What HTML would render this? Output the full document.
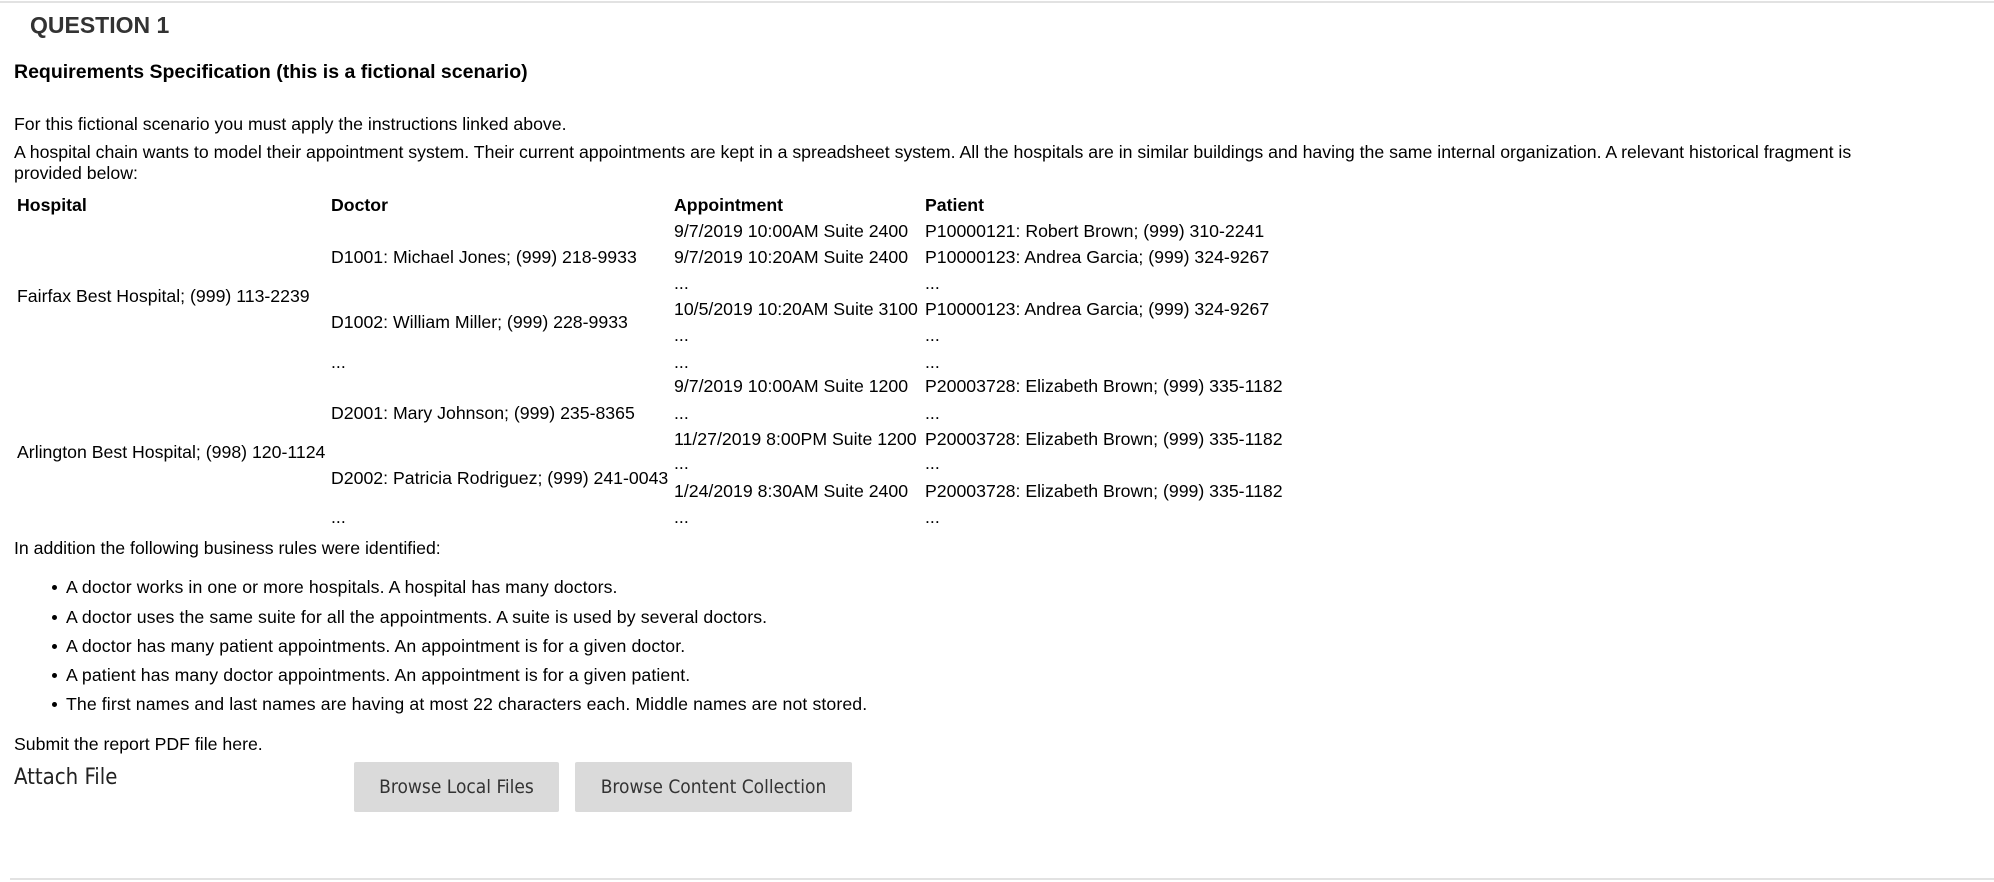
<!DOCTYPE html>
<html><head><meta charset="utf-8"><style>
html,body{margin:0;padding:0;background:#fff;}
body{width:1994px;height:882px;position:relative;overflow:hidden;font-family:"Liberation Sans",Arial,sans-serif;color:#000;}
.a{position:absolute;white-space:nowrap;font-size:17.7px;line-height:22px;margin-top:0px;}
.b{font-weight:bold;}
.btn{position:absolute;top:762px;height:50px;background:#dadada;border-radius:2px;color:#333;font-size:19px;line-height:50px;text-align:center;font-family:"DejaVu Sans Condensed","Liberation Sans",sans-serif;}
.li{position:absolute;left:66px;white-space:nowrap;font-size:17.7px;line-height:22px;letter-spacing:0.1px;}
.li:before{content:"";position:absolute;left:-14px;top:9px;width:5px;height:5px;border-radius:50%;background:#000;}
</style></head><body>
<div style="position:absolute;left:0;top:1px;width:1994px;height:2px;background:#e2e2e2"></div>
<div class="a b" style="left:30px;top:12px;font-size:23px;line-height:27px;color:#333">QUESTION 1</div>
<div class="a b" style="left:14px;top:61px;font-size:19.5px;line-height:23px">Requirements Specification (this is a fictional scenario)</div>
<div class="a" style="left:14px;top:113px">For this fictional scenario you must apply the instructions linked above.</div>
<div class="a" style="left:14px;top:141px">A hospital chain wants to model their appointment system. Their current appointments are kept in a spreadsheet system. All the hospitals are in similar buildings and having the same internal organization. A relevant historical fragment is</div>
<div class="a" style="left:14px;top:162px">provided below:</div>

<div class="a b" style="left:17px;top:194px">Hospital</div>
<div class="a b" style="left:331px;top:194px">Doctor</div>
<div class="a b" style="left:674px;top:194px">Appointment</div>
<div class="a b" style="left:925px;top:194px">Patient</div>

<div class="a" style="left:17px;top:285px">Fairfax Best Hospital; (999) 113-2239</div>
<div class="a" style="left:17px;top:441px">Arlington Best Hospital; (998) 120-1124</div>

<div class="a" style="left:331px;top:246px">D1001: Michael Jones; (999) 218-9933</div>
<div class="a" style="left:331px;top:311px">D1002: William Miller; (999) 228-9933</div>
<div class="a" style="left:331px;top:351px">...</div>
<div class="a" style="left:331px;top:402px">D2001: Mary Johnson; (999) 235-8365</div>
<div class="a" style="left:331px;top:467px">D2002: Patricia Rodriguez; (999) 241-0043</div>
<div class="a" style="left:331px;top:506px">...</div>

<div class="a" style="left:674px;top:220px">9/7/2019 10:00AM Suite 2400</div>
<div class="a" style="left:674px;top:246px">9/7/2019 10:20AM Suite 2400</div>
<div class="a" style="left:674px;top:272px">...</div>
<div class="a" style="left:674px;top:298px">10/5/2019 10:20AM Suite 3100</div>
<div class="a" style="left:674px;top:324px">...</div>
<div class="a" style="left:674px;top:351px">...</div>
<div class="a" style="left:674px;top:375px">9/7/2019 10:00AM Suite 1200</div>
<div class="a" style="left:674px;top:402px">...</div>
<div class="a" style="left:674px;top:428px">11/27/2019 8:00PM Suite 1200</div>
<div class="a" style="left:674px;top:452px">...</div>
<div class="a" style="left:674px;top:480px">1/24/2019 8:30AM Suite 2400</div>
<div class="a" style="left:674px;top:506px">...</div>

<div class="a" style="left:925px;top:220px">P10000121: Robert Brown; (999) 310-2241</div>
<div class="a" style="left:925px;top:246px">P10000123: Andrea Garcia; (999) 324-9267</div>
<div class="a" style="left:925px;top:272px">...</div>
<div class="a" style="left:925px;top:298px">P10000123: Andrea Garcia; (999) 324-9267</div>
<div class="a" style="left:925px;top:324px">...</div>
<div class="a" style="left:925px;top:351px">...</div>
<div class="a" style="left:925px;top:375px">P20003728: Elizabeth Brown; (999) 335-1182</div>
<div class="a" style="left:925px;top:402px">...</div>
<div class="a" style="left:925px;top:428px">P20003728: Elizabeth Brown; (999) 335-1182</div>
<div class="a" style="left:925px;top:452px">...</div>
<div class="a" style="left:925px;top:480px">P20003728: Elizabeth Brown; (999) 335-1182</div>
<div class="a" style="left:925px;top:506px">...</div>

<div class="a" style="left:14px;top:537px">In addition the following business rules were identified:</div>
<div class="li" style="top:576px">A doctor works in one or more hospitals. A hospital has many doctors.</div>
<div class="li" style="top:606px">A doctor uses the same suite for all the appointments. A suite is used by several doctors.</div>
<div class="li" style="top:635px">A doctor has many patient appointments. An appointment is for a given doctor.</div>
<div class="li" style="top:664px">A patient has many doctor appointments. An appointment is for a given patient.</div>
<div class="li" style="top:693px">The first names and last names are having at most 22 characters each. Middle names are not stored.</div>
<div class="a" style="left:14px;top:733px">Submit the report PDF file here.</div>
<div class="a" style="left:14px;top:765px;font-size:22px;line-height:26px;color:#222;font-family:'DejaVu Sans Condensed','Liberation Sans',sans-serif">Attach File</div>
<div class="btn" style="left:354px;width:205px">Browse Local Files</div>
<div class="btn" style="left:575px;width:277px">Browse Content Collection</div>
<div style="position:absolute;left:10px;top:878px;width:1984px;height:2px;background:#e2e2e2"></div>
</body></html>
